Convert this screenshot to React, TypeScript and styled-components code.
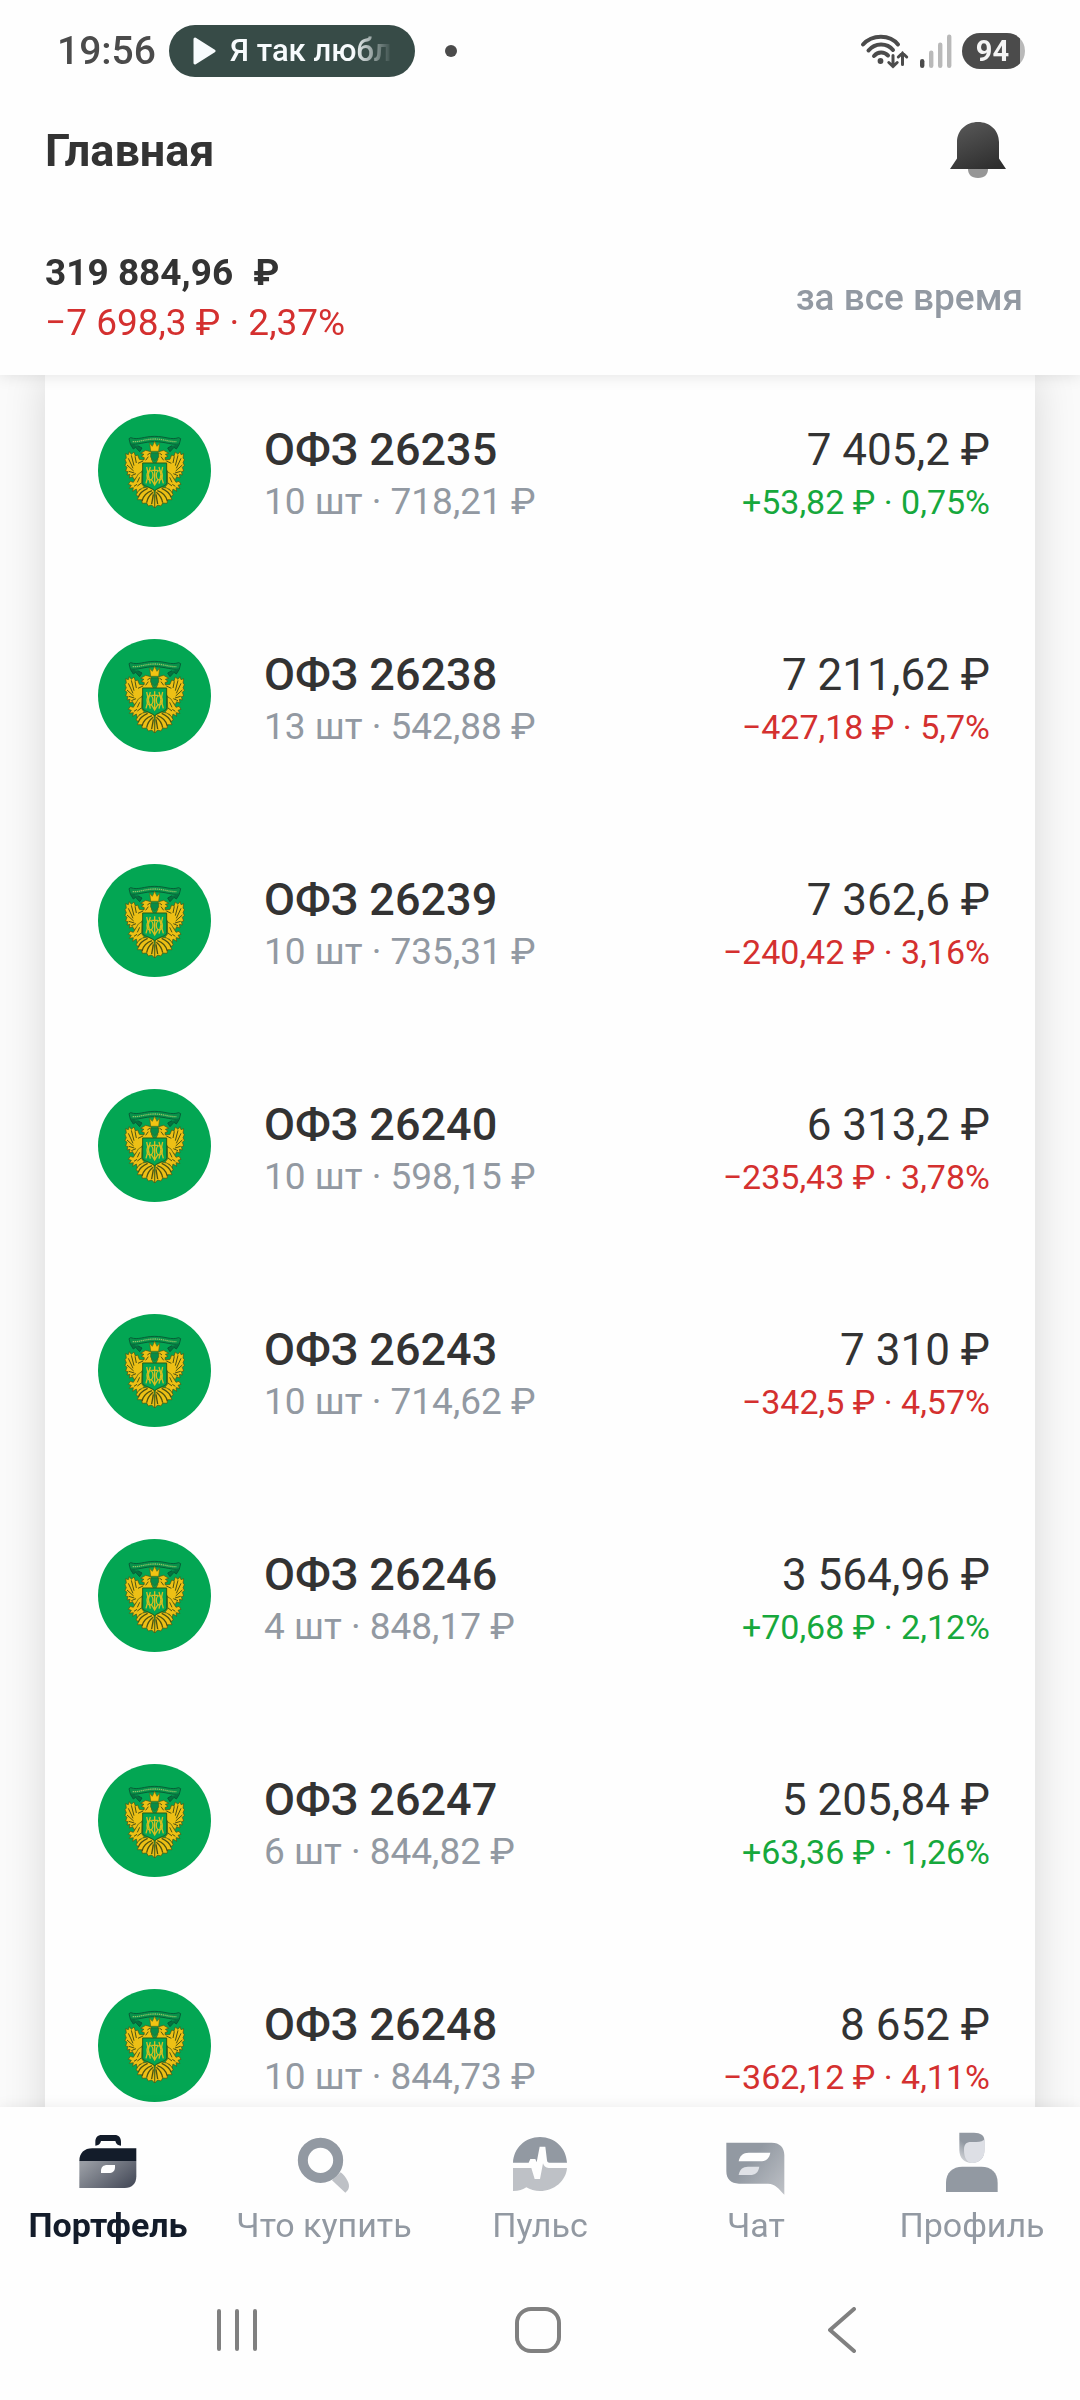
import * as React from "react";
import styled, { createGlobalStyle } from "styled-components";

const GlobalStyle = createGlobalStyle`
	* {
		box-sizing: border-box;
	}
	body {
		margin: 0;
		background: #fefefe;
		color: #333333;
		font-family: Roboto, "Noto Sans", sans-serif;
	}
	h1, h2, p, ul {
		margin: 0;
		padding: 0;
	}
	button {
		padding: 0;
		border: 0;
		background: none;
		color: inherit;
		font: inherit;
	}
	svg {
		display: block;
		flex: none;
	}
`;

const StyledPage = styled.div`
	display: flex;
	flex-direction: column;
	height: 100vh;
	overflow: hidden;
`;

const StyledHeader = styled.header`
	position: relative;
	z-index: 1;
	flex: none;
	background: #fefefe;
	box-shadow: 0 0 16px rgba(0, 0, 0, 0.12);
`;

const StyledStatusBar = styled.div`
	display: flex;
	align-items: center;
	justify-content: space-between;
	height: 102px;
	padding: 0 55px 0 57px;
	color: #4b4b4b;
`;

const StyledStatusGroup = styled.div<{ $gap: number }>`
	display: flex;
	align-items: center;
	gap: ${(props) => props.$gap}px;
`;

const StyledTime = styled.span`
	width: 98px;
	font-size: 39px;
	font-weight: 500;
	white-space: nowrap;
`;

const StyledPlayer = styled.button`
	display: flex;
	align-items: center;
	gap: 14px;
	width: 246px;
	height: 52px;
	padding: 0 16px 0 24px;
	border-radius: 26px;
	background: #374b47;
	color: #f7fbfd;
`;

const StyledTrack = styled.span`
	font-size: 31px;
	font-weight: 500;
	line-height: 52px;
	white-space: nowrap;
	mask-image: linear-gradient(to right, #000 76%, transparent 100%);
`;

const StyledDot = styled.span`
	width: 12px;
	height: 12px;
	margin-left: 16px;
	border-radius: 50%;
	background: #4b4b4b;
`;

const StyledBattery = styled.span`
	width: 63px;
	height: 36px;
	padding-right: 2px;
	border-radius: 18px;
	background: linear-gradient(to right, #4b4b4b 58px, #b9b9b9 58px);
	color: #f4f4f4;
	font-size: 29px;
	font-weight: 700;
	line-height: 36px;
	text-align: center;
`;

const StyledTitleRow = styled.div`
	display: flex;
	align-items: center;
	justify-content: space-between;
	height: 98px;
	padding: 0 74px 0 45px;
`;

const StyledTitle = styled.h1`
	font-size: 45px;
	font-weight: 700;
	line-height: 56px;
`;

const StyledSummary = styled.div`
	display: flex;
	align-items: center;
	justify-content: space-between;
	padding: 48px 57px 27px 45px;
	font-size: 37px;
	line-height: 50px;
`;

const StyledBalance = styled.p`
	display: flex;
	gap: 20px;
	font-weight: 700;
`;

const StyledBalanceChange = styled.p`
	color: #d4302f;
`;

const StyledPeriod = styled.button`
	color: #9299a2;
	font-weight: 500;
`;

const StyledMain = styled.main`
	flex: 1;
	min-height: 0;
	padding: 0 45px;
	overflow-y: auto;
	scrollbar-width: none;
	background: #fafafa;
`;

const StyledList = styled.ul`
	display: flex;
	flex-direction: column;
	gap: 112px;
	padding: 39px 45px 56px 53px;
	background: #fefefe;
	box-shadow: 0 0 40px rgba(0, 0, 0, 0.14);
	list-style: none;
`;

const StyledBond = styled.li`
	display: flex;
	align-items: flex-end;
	gap: 53px;
`;

const StyledBondText = styled.div`
	flex: 1;
`;

const StyledBondName = styled.h2`
	font-size: 45px;
	font-weight: 500;
	line-height: 54px;
`;

const StyledBondCount = styled.p`
	color: #9299a2;
	font-size: 37px;
	line-height: 50px;
`;

const StyledBondValue = styled.div`
	text-align: right;
`;

const StyledPrice = styled.p`
	font-size: 44px;
	line-height: 54px;
`;

const StyledChange = styled.p<{ $up: boolean }>`
	color: ${(props) => (props.$up ? "#16a83c" : "#d4302f")};
	font-size: 34px;
	line-height: 50px;
`;

const StyledTabBar = styled.nav`
	position: relative;
	z-index: 1;
	display: grid;
	grid-template-columns: repeat(5, 1fr);
	flex: none;
	height: 153px;
	padding-top: 16px;
	background: #fefefe;
	box-shadow: 0 0 14px rgba(0, 0, 0, 0.08);
`;

const StyledTab = styled.a<{ $active?: boolean }>`
	display: flex;
	flex-direction: column;
	align-items: center;
	gap: 10px;
	color: ${(props) => (props.$active ? "#131c2a" : "#9299a2")};
	font-size: 34px;
	font-weight: ${(props) => (props.$active ? 700 : 400)};
	line-height: 40px;
	text-decoration: none;
	white-space: nowrap;
`;

const StyledSystemBar = styled.div`
	position: relative;
	z-index: 1;
	display: grid;
	grid-template-columns: repeat(3, 1fr);
	flex: none;
	height: 140px;
	padding: 0 86px;
	background: #fefefe;
`;

const StyledSystemButton = styled.button`
	display: flex;
	align-items: center;
	justify-content: center;
`;

const WifiIcon: React.FC = () => (
	<svg width="50" height="36" viewBox="0 0 50 36" fill="none" stroke="#4b4b4b" strokeWidth="4" strokeLinecap="round">
		<path d="M3 11.5C12 1 30 1 38 11.5" />
		<path d="M8.500 17.500C15 9.500 27 9.500 33 17" />
		<path d="M14 23C18 18.500 24 18.500 28 22.500" />
		<circle cx="20.500" cy="28" r="2.900" fill="#4b4b4b" stroke="none" />
		<path d="M33 22.500V33.500M28.800 29.500L33 33.500L37.200 29.500" strokeWidth="3" />
		<path d="M42.500 31.500V20M38.300 24L42.500 20L46.700 24" strokeWidth="3" />
	</svg>
);

const SignalIcon: React.FC = () => (
	<svg width="32" height="36" viewBox="0 0 32 36">
		<rect x="0" y="26" width="4.400" height="9" rx="2.200" fill="#4b4b4b" />
		<rect x="9" y="17.500" width="4.400" height="17.500" rx="2.200" fill="#b9b9b9" />
		<rect x="18" y="9.500" width="4.400" height="25.500" rx="2.200" fill="#b9b9b9" />
		<rect x="27" y="1.500" width="4.400" height="33.500" rx="2.200" fill="#b9b9b9" />
	</svg>
);

const BellIcon: React.FC = () => (
	<svg width="56" height="58" viewBox="0 0 56 58">
		<defs>
			<linearGradient id="bell" x1="0.200" y1="0" x2="0.700" y2="1">
				<stop offset="0" stopColor="#585858" />
				<stop offset="1" stopColor="#2f2f2f" />
			</linearGradient>
		</defs>
		<path d="M18 47H38C38 52 35 56 28 56S18 52 18 47Z" fill="#969696" />
		<path d="M28 0C40 0 49 8.500 49 20V36.500L56 47H0L7 36.500V20C7 8.500 16 0 28 0Z" fill="url(#bell)" />
	</svg>
);

// right half of the eagle, mirrored for the left one
const EagleHalf: React.FC = () => (
	<g stroke="#4d5212" strokeWidth="2" strokeLinejoin="round">
		<path
			fill="#edc015"
			d="M197 176L204 162L199 151L206 140L221 136L236 145L226 148L234 154L225 158L226 165L240 163L245 150L252 153L256 141L264 148L270 140L273 149L281 146L279 159L283 164L279 173L283 181L277 187L281 198L274 200L277 210L268 208L270 219L260 215L256 224L247 216L236 207L231 196Z"
		/>
		<path
			fill="#edc015"
			d="M232 200L243 207L250 219L258 232L267 229L273 238L264 241L270 250L258 248L260 259L249 252L246 264L238 252L229 252L226 245L233 236Z"
		/>
		<path
			fill="#edc015"
			d="M196 255L214 246L230 249L243 258L250 270L242 275L246 284L233 284L231 295L218 294L213 303L203 300L194 309Z"
		/>
		<path fill="none" d="M253 154L249 174M264 151L256 182M273 160L259 190M277 180L257 198M272 199L255 204M264 212L250 206" strokeWidth="3" />
		<path fill="none" d="M202 257C217 262 228 272 232 288M199 262C209 270 216 282 218 293M198 268L203 297M215 250C226 255 239 264 243 276" strokeWidth="4" />
		<path fill="none" d="M208 144L216 150M213 155L221 166M229 168L244 175M239 217L246 232M234 234L246 243M247 238L256 244" strokeWidth="3" />
	</g>
);

const Emblem: React.FC = () => (
	<svg width="113" height="113" viewBox="24 27 339 339" aria-hidden="true">
		<circle cx="193.500" cy="196.500" r="169.500" fill="#03a653" />
		<path
			d="M117 101L122 98C145 106 162 94 194 94S243 106 266 98L272 101L268 117C246 121 226 110 194 110S142 121 121 117Z"
			fill="#07924a"
			stroke="#075f37"
			strokeWidth="3"
		/>
		<path d="M128 110C150 111 168 102 194 102S238 111 260 110" fill="none" stroke="#8fc264" strokeWidth="4" strokeDasharray="4 2" />
		<path d="M121 118L130 132L137 127L149 140L156 129L143 122M268 118L259 132L252 127L240 140L233 129L246 122" fill="#06723f" stroke="#065c36" strokeWidth="3" />
		<EagleHalf />
		<g transform="translate(388 0) scale(-1 1)">
			<EagleHalf />
		</g>
		<path d="M179 115L187 124L194 109L201 124L209 115L206 139H182Z" fill="#f3c413" stroke="#5d6312" strokeWidth="2" />
		<path d="M182 144H206V157L194 168L182 157Z" fill="#078c49" stroke="#3c6319" strokeWidth="2" />
		<path d="M158 174H230V233C230 244 209 244 194 257C179 244 158 244 158 233Z" fill="#03a653" stroke="#275e1d" strokeWidth="3" />
		<path
			d="M170 186L181 236M218 186L207 236M181 186L168 235M207 186L220 235M194 184V241M184 196H204M184 223L194 240L204 223"
			fill="none"
			stroke="#d7be20"
			strokeWidth="4"
		/>
		<ellipse cx="180" cy="211" rx="9" ry="14" fill="none" stroke="#d7be20" strokeWidth="4" />
		<ellipse cx="208" cy="211" rx="9" ry="14" fill="none" stroke="#d7be20" strokeWidth="4" />
	</svg>
);

const PortfolioIcon: React.FC = () => (
	<svg width="72" height="72" viewBox="36 39 216 216">
		<defs>
			<linearGradient id="case" x1="0" y1="0.200" x2="1" y2="0.800">
				<stop offset="0" stopColor="#989ca3" />
				<stop offset="1" stopColor="#474c5a" />
			</linearGradient>
		</defs>
		<path d="M106 107V95C106 83 113 75 125 75H164C176 75 183 83 183 95V107C174 107 168 102 166 93H123C121 102 115 107 106 107Z" fill="#131c2a" />
		<path d="M58 153H229V199C229 221 216 234 194 234H58Z" fill="url(#case)" />
		<path d="M58 153C58 129 73 115 97 115H229V153Z" fill="#131c2a" />
		<path d="M123 189V183C123 171 130 165 142 165H165V171C165 183 158 189 146 189Z" fill="#fefefe" />
	</svg>
);

const SearchIcon: React.FC = () => (
	<svg width="72" height="72" viewBox="54 39 216 216">
		<path d="M186 211L212 187C229 201 241 222 236 235C234 241 230 245 226 248Z" fill="#bec1c6" />
		<circle cx="151.500" cy="151" r="53" fill="none" stroke="#9299a2" strokeWidth="30" />
	</svg>
);

const PulseIcon: React.FC = () => (
	<svg width="72" height="72" viewBox="702 39 216 216">
		<path d="M729 158C731 115 765 81 810 81S889 115 891 158H838C834 158 831 155 831 151L826 110H809L800 157L796 147H781L776 158Z" fill="#9299a2" />
		<path d="M729 174H784L794 207H810L819 160C821 168 827 174 836 174H891C888 213 852 243 810 243C795 243 780 239 769 232C760 239 746 243 729 243Z" fill="#bec1c6" />
	</svg>
);

const ChatIcon: React.FC = () => (
	<svg width="72" height="72" viewBox="60 39 216 216">
		<defs>
			<linearGradient id="chat" x1="0.300" y1="0.500" x2="1" y2="1">
				<stop offset="0" stopColor="#9299a2" />
				<stop offset="1" stopColor="#bfc2c7" />
			</linearGradient>
		</defs>
		<path d="M79 98H215C239 98 253 112 253 135V254C237 237 226 221 204 221H117C93 221 79 207 79 184Z" fill="url(#chat)" />
		<path d="M116 154C119 137 129 128 146 128H211C208 145 198 154 181 154Z" fill="#fefefe" />
		<path d="M116 195C119 178 128 170 144 170H178C175 187 166 195 150 195Z" fill="#dfe1e6" />
	</svg>
);

const ProfileIcon: React.FC = () => (
	<svg width="72" height="72" viewBox="708 39 216 216">
		<defs>
			<linearGradient id="hair" x1="0.800" y1="0.100" x2="0.200" y2="1">
				<stop offset="0" stopColor="#9299a2" />
				<stop offset="0.500" stopColor="#9299a2" />
				<stop offset="1" stopColor="#d4d6da" />
			</linearGradient>
		</defs>
		<path d="M778 68H822C842 68 853 77 853 90V120C853 144 838 159 816 159C793 159 778 144 778 120Z" fill="url(#hair)" />
		<path d="M792 119C792 103 799 96 813 96H829C842 96 850 93 854 88V120C854 144 838 159 816 159C801 157 792 144 792 119Z" fill="#dddfe5" />
		<path d="M738 246V218C738 188 758 170 787 170H844C874 170 893 188 893 218V246Z" fill="#9299a2" />
	</svg>
);

const bonds = [
	{ name: "ОФЗ 26235", count: "10 шт · 718,21 ₽", price: "7 405,2 ₽", change: "+53,82 ₽ · 0,75%" },
	{ name: "ОФЗ 26238", count: "13 шт · 542,88 ₽", price: "7 211,62 ₽", change: "−427,18 ₽ · 5,7%" },
	{ name: "ОФЗ 26239", count: "10 шт · 735,31 ₽", price: "7 362,6 ₽", change: "−240,42 ₽ · 3,16%" },
	{ name: "ОФЗ 26240", count: "10 шт · 598,15 ₽", price: "6 313,2 ₽", change: "−235,43 ₽ · 3,78%" },
	{ name: "ОФЗ 26243", count: "10 шт · 714,62 ₽", price: "7 310 ₽", change: "−342,5 ₽ · 4,57%" },
	{ name: "ОФЗ 26246", count: "4 шт · 848,17 ₽", price: "3 564,96 ₽", change: "+70,68 ₽ · 2,12%" },
	{ name: "ОФЗ 26247", count: "6 шт · 844,82 ₽", price: "5 205,84 ₽", change: "+63,36 ₽ · 1,26%" },
	{ name: "ОФЗ 26248", count: "10 шт · 844,73 ₽", price: "8 652 ₽", change: "−362,12 ₽ · 4,11%" },
];

const tabs = [
	{ title: "Портфель", href: "#portfolio", icon: <PortfolioIcon />, active: true },
	{ title: "Что купить", href: "#buy", icon: <SearchIcon /> },
	{ title: "Пульс", href: "#pulse", icon: <PulseIcon /> },
	{ title: "Чат", href: "#chat", icon: <ChatIcon /> },
	{ title: "Профиль", href: "#profile", icon: <ProfileIcon /> },
];

const App: React.FC = () => {
	return (
		<StyledPage>
			<GlobalStyle />
			<StyledHeader>
				<StyledStatusBar>
					<StyledStatusGroup $gap={14}>
						<StyledTime>19:56</StyledTime>
						<StyledPlayer type="button">
							<svg width="23" height="28" viewBox="0 0 23 28">
								<path d="M2 2L21 14L2 26Z" fill="#f7fbfd" stroke="#f7fbfd" strokeWidth="3" strokeLinejoin="round" />
							</svg>
							<StyledTrack>Я так любл</StyledTrack>
						</StyledPlayer>
						<StyledDot />
					</StyledStatusGroup>
					<StyledStatusGroup $gap={10}>
						<WifiIcon />
						<SignalIcon />
						<StyledBattery>94</StyledBattery>
					</StyledStatusGroup>
				</StyledStatusBar>
				<StyledTitleRow>
					<StyledTitle>Главная</StyledTitle>
					<button type="button" aria-label="Уведомления">
						<BellIcon />
					</button>
				</StyledTitleRow>
				<StyledSummary>
					<div>
						<StyledBalance>
							<span>319 884,96</span>
							<span>₽</span>
						</StyledBalance>
						<StyledBalanceChange>−7 698,3 ₽ · 2,37%</StyledBalanceChange>
					</div>
					<StyledPeriod type="button">за все время</StyledPeriod>
				</StyledSummary>
			</StyledHeader>
			<StyledMain>
				<StyledList>
					{bonds.map((bond) => (
						<StyledBond key={bond.name}>
							<Emblem />
							<StyledBondText>
								<StyledBondName>{bond.name}</StyledBondName>
								<StyledBondCount>{bond.count}</StyledBondCount>
							</StyledBondText>
							<StyledBondValue>
								<StyledPrice>{bond.price}</StyledPrice>
								<StyledChange $up={bond.change.startsWith("+")}>{bond.change}</StyledChange>
							</StyledBondValue>
						</StyledBond>
					))}
				</StyledList>
			</StyledMain>
			<StyledTabBar>
				{tabs.map((tab) => (
					<StyledTab key={tab.title} href={tab.href} $active={tab.active}>
						{tab.icon}
						{tab.title}
					</StyledTab>
				))}
			</StyledTabBar>
			<StyledSystemBar>
				<StyledSystemButton type="button" aria-label="Недавние">
					<svg width="44" height="46" viewBox="0 0 44 46" stroke="#808080" strokeWidth="4" strokeLinecap="round">
						<path d="M4 4V42M22 4V42M40 4V42" />
					</svg>
				</StyledSystemButton>
				<StyledSystemButton type="button" aria-label="Домой">
					<svg width="50" height="46" viewBox="0 0 50 46" fill="none" stroke="#808080" strokeWidth="4">
						<rect x="2" y="2" width="42" height="42" rx="14" />
					</svg>
				</StyledSystemButton>
				<StyledSystemButton type="button" aria-label="Назад">
					<svg width="30" height="46" viewBox="0 0 30 46" fill="none" stroke="#808080" strokeWidth="4" strokeLinecap="round" strokeLinejoin="round">
						<path d="M26 2L2 23L26 44" />
					</svg>
				</StyledSystemButton>
			</StyledSystemBar>
		</StyledPage>
	);
};

export default App;
